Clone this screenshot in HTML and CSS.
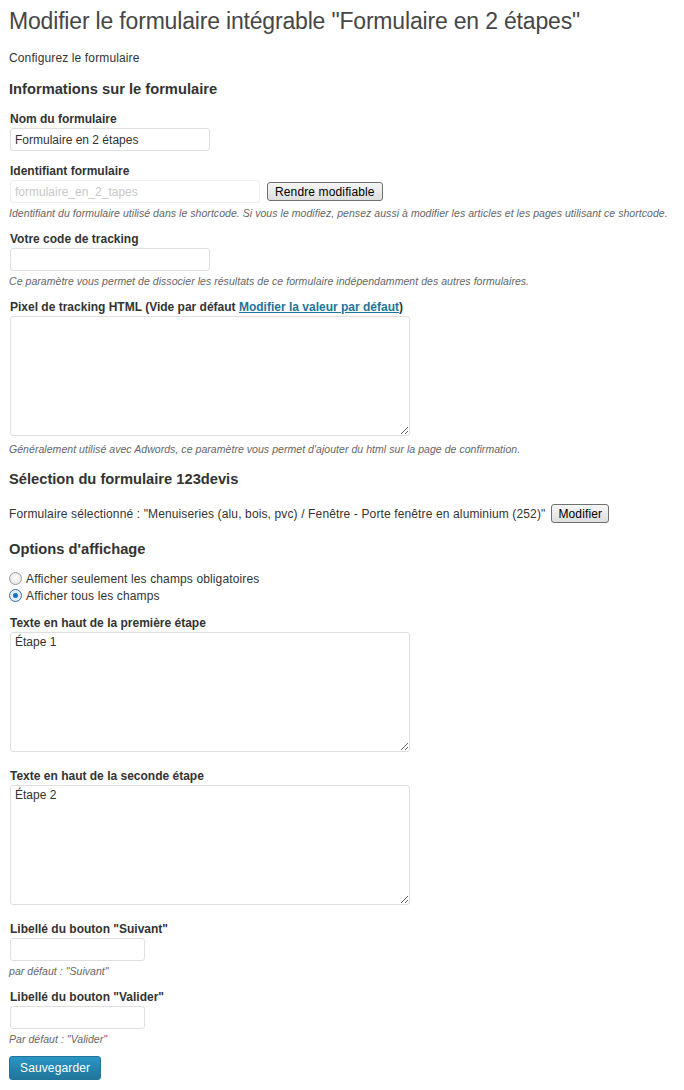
FILE: index.html
```html
<!DOCTYPE html>
<html lang="fr">
<head>
    <meta charset="UTF-8">
    <title>Modifier le formulaire intégrable</title>
    <link rel="stylesheet" href="styles.css">
</head>
<body>
<div class="wrap">
    <h2 class="page-title">Modifier le formulaire intégrable "Formulaire en 2 étapes"</h2>

    <p class="intro">Configurez le formulaire</p>

    <h3 class="section first">Informations sur le formulaire</h3>

    <div class="field">
        <label class="field-label">Nom du formulaire</label>
        <input type="text" class="text-input" value="Formulaire en 2 étapes">
    </div>

    <div class="field">
        <label class="field-label">Identifiant formulaire</label>
        <div class="inline-row">
            <input type="text" class="text-input wide" value="formulaire_en_2_tapes" disabled>
            <button class="btn">Rendre modifiable</button>
        </div>
        <p class="description">Identifiant du formulaire utilisé dans le shortcode. Si vous le modifiez, pensez aussi à modifier les articles et les pages utilisant ce shortcode.</p>
    </div>

    <div class="field gap-sm">
        <label class="field-label">Votre code de tracking</label>
        <input type="text" class="text-input">
        <p class="description">Ce paramètre vous permet de dissocier les résultats de ce formulaire indépendamment des autres formulaires.</p>
    </div>

    <div class="field gap-sm">
        <label class="field-label">Pixel de tracking HTML (Vide par défaut <a href="#">Modifier la valeur par défaut</a>)</label>
        <textarea class="text-area"></textarea>
        <p class="description after-area">Généralement utilisé avec Adwords, ce paramètre vous permet d'ajouter du html sur la page de confirmation.</p>
    </div>

    <h3 class="section">Sélection du formulaire 123devis</h3>

    <div class="selected-row">
        <span>Formulaire sélectionné : "Menuiseries (alu, bois, pvc) / Fenêtre - Porte fenêtre en aluminium (252)"</span>
        <button class="btn">Modifier</button>
    </div>

    <h3 class="section options">Options d'affichage</h3>

    <div class="radios">
        <label class="radio-line"><input type="radio" name="champs" class="radio"> Afficher seulement les champs obligatoires</label>
        <label class="radio-line"><input type="radio" name="champs" class="radio" checked> Afficher tous les champs</label>
    </div>

    <div class="field gap-sm">
        <label class="field-label">Texte en haut de la première étape</label>
        <textarea class="text-area">Étape 1</textarea>
    </div>

    <div class="field gap-lg">
        <label class="field-label">Texte en haut de la seconde étape</label>
        <textarea class="text-area">Étape 2</textarea>
    </div>

    <div class="field gap-lg">
        <label class="field-label">Libellé du bouton "Suivant"</label>
        <input type="text" class="text-input small">
        <p class="description">par défaut : "Suivant"</p>
    </div>

    <div class="field gap-sm">
        <label class="field-label">Libellé du bouton "Valider"</label>
        <input type="text" class="text-input small">
        <p class="description">Par défaut : "Valider"</p>
    </div>

    <button class="btn-primary">Sauvegarder</button>
</div>
</body>
</html>
```

FILE: styles.css
```css
body {
    margin: 0;
    background: #fff;
    color: #333;
    font-family: "Liberation Sans", Arial, sans-serif;
    font-size: 12px;
    letter-spacing: 0.13px;
}
.wrap {
    padding: 0 10px 0 9px;
}
.page-title {
    margin: 0;
    padding: 7px 0 0;
    font-size: 23px;
    font-weight: normal;
    line-height: 29px;
    letter-spacing: -0.18px;
    color: #464646;
}
.intro {
    margin: 14px 0 0;
    line-height: 16px;
}
.section {
    margin: 14px 0 0;
    font-size: 14.7px;
    line-height: 18px;
    font-weight: bold;
    letter-spacing: 0;
    color: #333;
}
.section.first {
    margin-top: 14px;
}
.field {
    margin-top: 12px;
}
.section.first + .field {
    margin-top: 13px;
}
.field.gap-sm {
    margin-top: 11px;
}
.field.gap-lg {
    margin-top: 16px;
}
.field-label {
    display: block;
    font-weight: bold;
    letter-spacing: 0;
    line-height: 16px;
    margin-bottom: 1px;
    margin-left: 1px;
}
.field-label a {
    color: #21759b;
}
.text-input {
    display: block;
    box-sizing: border-box;
    width: 200px;
    height: 23px;
    margin: 0 0 0 1px;
    padding: 2px 4px;
    border: 1px solid #dfdfdf;
    border-radius: 3px;
    background: #fff;
    font-family: inherit;
    font-size: 12px;
    color: #333;
}
.text-input.wide {
    width: 250px;
}
.text-input.small {
    width: 135px;
}
.text-input:disabled {
    border-color: #f0f0f0;
    color: #c8c8c8;
}
.inline-row {
    display: flex;
    align-items: center;
    gap: 7px;
}
.btn {
    height: 19px;
    padding: 0 6px;
    border: 1px solid #707070;
    border-radius: 3px;
    background: linear-gradient(#f6f6f6, #dedede);
    font-family: inherit;
    font-size: 12px;
    letter-spacing: 0.13px;
    color: #000;
    line-height: 16px;
}
.inline-row .btn {
    padding: 0 7px;
}
.description {
    margin: 3px 0 0;
    font-size: 10.5px;
    line-height: 14px;
    font-style: italic;
    letter-spacing: 0.05px;
    color: #666;
}
.description.after-area {
    margin-top: 6px;
}
.text-area {
    display: block;
    box-sizing: border-box;
    width: 400px;
    height: 120px;
    margin: 0 0 0 1px;
    padding: 2px 4px;
    border: 1px solid #dfdfdf;
    border-radius: 3px;
    font-family: inherit;
    font-size: 12px;
    color: #333;
    resize: both;
}
.selected-row {
    display: flex;
    align-items: center;
    gap: 6px;
    margin-top: 16px;
    height: 19px;
}
.section.options {
    margin-top: 17px;
}
.radios {
    margin-top: 12px;
}
.radio-line {
    display: flex;
    align-items: center;
    gap: 4px;
    height: 17px;
}
.radio {
    appearance: none;
    width: 13px;
    height: 13px;
    margin: 0;
    border: 1px solid #9a9a9a;
    border-radius: 50%;
    background: radial-gradient(circle at 50% 40%, #fff 0, #e4e4e4 80%);
}
.radio:checked {
    border-color: #3a6f9c;
    background: radial-gradient(circle, #1a5ea8 0, #2c86d2 30%, #e8eef4 38%, #dfe6ee 100%);
}
.btn-primary {
    display: block;
    margin-top: 10px;
    height: 24px;
    padding: 0 10px;
    border: 1px solid #21759b;
    border-radius: 3px;
    background: linear-gradient(#2a95c5, #21759b);
    color: #fff;
    font-family: inherit;
    font-size: 12px;
    letter-spacing: 0.13px;
}
```
